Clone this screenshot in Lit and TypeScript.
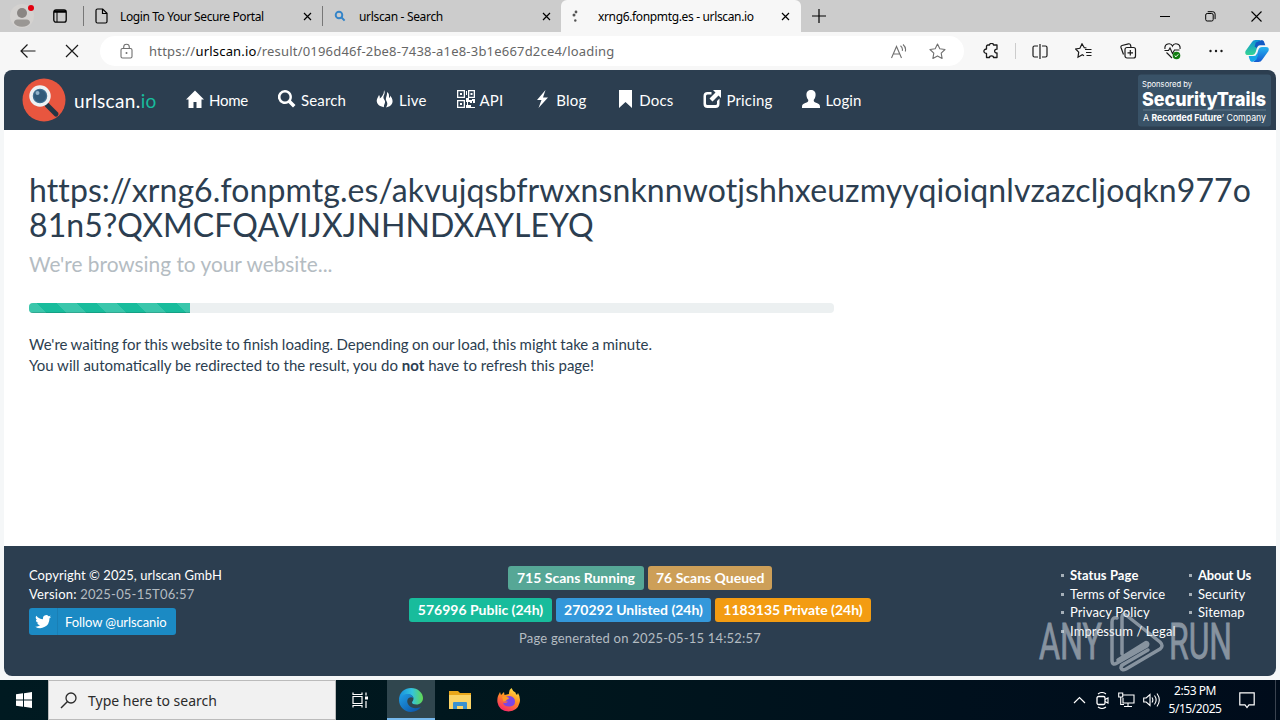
import { LitElement, html, css, svg } from "lit";
import { customElement } from "lit/decorators.js";

const icon = (body: unknown, w = 18, h = 18, vb = `0 0 ${w} ${h}`) =>
  html`<svg width=${w} height=${h} viewBox=${vb} fill="none" stroke="currentColor" stroke-width="1">${body}</svg>`;

const closeX = icon(svg`<path d="M1 1l7 7M8 1l-7 7" stroke-width="1.2"/>`, 9, 9);

/* ---------- Browser tab strip ---------- */
@customElement("tab-strip")
class TabStrip extends LitElement {
  static styles = css`
    :host { display: flex; height: 32px; background: #cccccc; color: #000; font: 12px "Noto Sans", sans-serif; }
    svg { display: block; flex: none; }
    .profile { position: relative; width: 48px; padding: 4px 0 0 10px; box-sizing: border-box; }
    .dot { position: absolute; left: 28px; top: 5px; width: 6px; height: 6px; border-radius: 50%; background: #e3000f; }
    .workspace { width: 35px; display: flex; align-items: center; padding-left: 5px; box-sizing: border-box; }
    .tab { display: flex; align-items: center; width: 239px; box-sizing: border-box; padding: 0 10px 0 12px; position: relative; }
    .tab::before { content: ""; position: absolute; left: 0; top: 6px; width: 1px; height: 20px; background: #777; }
    .tab span { flex: 1; white-space: nowrap; }
    .first span { padding-left: 12px; letter-spacing: -0.4px; }
    .second span { padding-left: 13px; letter-spacing: -0.33px; }
    .active { width: 240px; background: #f7f7f7; border-radius: 6px 6px 0 0; padding-left: 10px; padding-right: 11px; }
    .active::before { display: none; }
    .active span { padding-left: 19px; letter-spacing: -0.35px; }
    .plus { padding: 9px 0 0 11px; flex: 1; border-radius: 0 0 0 5px; }
    .win { display: flex; align-items: center; gap: 35px; padding-right: 18px; }
  `;
  render() {
    return html`
      <div class="profile">
        ${icon(svg`<circle cx="12" cy="12" r="12" fill="#d4d2d0" stroke="none"/><circle cx="12" cy="9" r="5" fill="#8a8683" stroke="none"/><path d="M4 19q0-3.500 3.500-3.500h9q3.500 0 3.500 3.500q-2 3.700-8 3.700t-8-3.700z" fill="#9a9794" stroke="none"/>`, 24, 24)}
        <div class="dot"></div>
      </div>
      <div class="workspace">${icon(svg`<rect x=".8" y=".8" width="12.400" height="12.400" rx="2.200" stroke-width="1.300"/><path d="M1 2.500h12" stroke-width="2.500"/><path d="M4 3v10" stroke-width="1"/>`, 14, 14)}</div>
      <div class="tab first">
        ${icon(svg`<path d="M1 2.500Q1 1 2.500 1h5.200L12 5.300v8.200q0 1.500-1.500 1.500h-8Q1 15 1 13.500zM7.500 1v4.500h4.500" stroke-width="1.200"/>`, 13, 16)}
        <span>Login To Your Secure Portal</span>${closeX}
      </div>
      <div class="tab second">
        ${icon(svg`<circle cx="5" cy="5" r="3.300" stroke="#3484c8" stroke-width="1.900"/><path d="M7.300 7.300l3.300 3.300" stroke="#3484c8" stroke-width="2"/>`, 12, 12)}
        <span>urlscan - Search</span>${closeX}
      </div>
      <div class="tab active">
        ${icon(svg`<g fill="#555" stroke="none"><circle cx="5" cy="2" r="1.400"/><circle cx="3" cy="5" r="1.500"/><circle cx="4.300" cy="10.500" r="1.200"/></g>`, 8, 13)}
        <span>xrng6.fonpmtg.es - urlscan.io</span>${closeX}
      </div>
      <div class="plus">${icon(svg`<path d="M7 0v14M0 7h14" stroke-width="1.200"/>`, 14, 14)}</div>
      <div class="win">
        ${icon(svg`<path d="M0 5.500h10"/>`, 10, 10)}
        ${icon(svg`<rect x=".7" y="2.500" width="7.500" height="7.500" rx="1.500"/><path d="M2.700.7h5q2.400 0 2.400 2.400v5"/>`, 11, 11)}
        ${icon(svg`<path d="M.5.5l10 10M10.500.5l-10 10" stroke-width="1.100"/>`, 11, 11)}
      </div>`;
  }
}

/* ---------- Address bar ---------- */
@customElement("tool-bar")
class ToolBar extends LitElement {
  static styles = css`
    :host { display: flex; align-items: center; height: 38px; background: #f7f7f7; color: #1a1a1a; box-sizing: border-box; padding-left: 20px; }
    svg { display: block; flex: none; }
    .stop { margin: 0 21px 0 29px; }
    .address { display: flex; align-items: center; width: 864px; height: 30px; box-sizing: border-box; border-radius: 15px; background: #fff; padding: 0 18px 0 20px; color: #707070; }
    .url { flex: 1; margin-left: 16px; font: 13px "Noto Sans", sans-serif; color: #666; white-space: nowrap; letter-spacing: 0.2px; }
    .url b { font-weight: 400; color: #000; }
    .address svg:last-child { margin-left: 22px; }
    .tools { display: flex; align-items: center; padding-left: 19px; }
    .tools svg { margin-right: 27.500px; }
    .tools svg:first-child { margin-right: 17px; }
    .tools svg:last-child { margin: 0 0 0 -5px; }
    .sep { width: 1px; height: 16px; background: #ccc; margin-right: 15.500px; }
  `;
  render() {
    return html`
      ${icon(svg`<path d="M15.500 7H.8M7.500.5L1 7l6.500 6.500" stroke-width="1.200"/>`, 16, 14)}
      <span class="stop">${icon(svg`<path d="M1 1l12 12M13 1L1 13" stroke-width="1.200"/>`, 14, 14)}</span>
      <div class="address">
        ${icon(svg`<rect x="1" y="5.500" width="11" height="9.500" rx="1.500" stroke-width="1.100"/><path d="M3.700 5.500V4a2.800 2.800 0 0 1 5.600 0v1.500" stroke-width="1.100"/><circle cx="6.500" cy="10" r="1" fill="currentColor" stroke="none"/>`, 13, 16)}
        <div class="url">https://<b>urlscan.io</b>/result/0196d46f-2be8-7438-a1e8-3b1e667d2ce4/loading</div>
        ${icon(svg`<path d="M.5 14L5.500 2.500L10.500 14M2.300 10h6.400M9.500 1.800q2.500 2 1.800 5M12 .5q3.400 3 2.300 7" stroke-width="1.100"/>`, 16, 15)}
        ${icon(svg`<path d="M8.500 1l2.300 4.700 5.200.8-3.800 3.700.9 5.200-4.600-2.500-4.600 2.500.9-5.200L1 6.500l5.200-.8z" stroke-linejoin="round" stroke-width="1.100"/>`, 17, 17)}
      </div>
      <div class="tools">
        ${icon(svg`<path d="M3.500 3.500Q3.500 2 5 2h1.500c0-2.200 4-2.200 4 0H14v4.200c-3.200-.3-3.200 4.100 0 3.800v4.500h-3.500c0-2.200-4-2.200-4 0H3.500v-4.200c-3.500 0-3.500-4.300 0-4.300z" stroke-width="1.300" stroke-linejoin="round"/>`, 15, 16)}
        <div class="sep"></div>
        ${icon(svg`<path d="M6 2H2.500Q1 2 1 3.500v8Q1 13 2.500 13H6M10 2h3.500Q15 2 15 3.500v8q0 1.500-1.500 1.500H10M8 0v15" stroke-width="1.200"/>`, 16, 15)}
        ${icon(svg`<path d="M11.500 5l-2.200-.3L7 .8 4.900 5.300.7 6l3 3.200-.7 5 4.300-2.500 1.700 1M10 6.500h6.500M11 9.500h5.500M11.500 12.500h5" stroke-width="1.200"/>`, 17, 16)}
        ${icon(svg`<path d="M3.500 11.500L1 4.500Q.6 3 2 2.500L8.500.8Q10 .5 10.500 2l.5 2" stroke-width="1.200"/><rect x="5" y="4.500" width="10.500" height="10.500" rx="2" stroke-width="1.200"/><path d="M10.300 7v5.500M7.500 9.800H13" stroke-width="1.200"/>`, 17, 16)}
        ${icon(svg`<path d="M1 6C0 0 7-.5 8.500 3 10-.5 17 0 16 6M2.500 9.500L8 15M.5 7.500h4L6 5l2.500 5.500L10.500 7h5" stroke-width="1.100"/><circle cx="12.500" cy="12.500" r="3.800" fill="#107c10" stroke="none"/><path d="M10.700 12.600l1.300 1.200 2.300-2.500" stroke="#fff"/>`, 17, 17)}
        ${icon(svg`<g fill="currentColor" stroke="none"><circle cx="1.500" cy="2" r="1.200"/><circle cx="7" cy="2" r="1.200"/><circle cx="12.500" cy="2" r="1.200"/></g>`, 14, 4)}
        ${icon(svg`<defs><linearGradient id="a" x1="0" y1="0" x2="0" y2="1"><stop offset="0" stop-color="#0e91d5"/><stop offset="1" stop-color="#35d593"/></linearGradient><linearGradient id="b" x1="0" y1="0" x2="0" y2="1"><stop offset="0" stop-color="#27b5f0"/><stop offset="1" stop-color="#1459d0"/></linearGradient></defs><g stroke="none"><path d="M7 2q1-2 3.500-2H17q-2.500 0-3.500 3l-2.800 9Q9.800 15 7 15H3Q-.6 15 .5 11z" fill="url(#a)"/><path d="M17 0q2 .3 2.700 3.500l.6 1.800h-5.500q-2.200 0-3 2.700L9.600 6.500l1.200-4z" fill="#125ac4"/><path d="M17 20q-1 2-3.500 2H7q2.500 0 3.500-3l2.800-9Q14.200 7 17 7h4q3.600 0 2.500 4z" fill="url(#b)"/><path d="M7 22q-2-.3-2.700-3.500L3.700 16H9q2 0 3-2.500l1.200 1.500-2 5z" fill="#16a5e8"/></g>`, 24, 22)}
      </div>`;
  }
}

/* ---------- urlscan page ---------- */
const navItems = [
  ["Home", svg`<path d="M9 .5l9 9h-2.500V18h-5v-6h-3v6h-5V9.500H0z"/>`],
  ["Search", svg`<path fill-rule="evenodd" d="M7 0a7 7 0 0 1 6 10.500l4.500 4.500-2.500 2.500-4.500-4.500A7 7 0 1 1 7 0zm0 2.500a4.500 4.500 0 1 0 0 9 4.500 4.500 0 0 0 0-9z"/>`],
  ["Live", svg`<path d="M8 0c2 4-1 5-.5 8 .2 2 2 2 1.500 4.500-.3 2-1.500 2.500-1 4.700C3 16.500.3 13.500.8 10c.3-2 1.500-3 2.200-5 .8 1 1 2 .7 3.500C6 7 8.200 4 8 0zM11 2c3 2 1.500 4 2.300 6 .7-.5 1-1.300.8-2.500 4 4.500 3.500 10.500-4.100 12 1.700-3 1.700-4.500.2-7C9 8 11.500 5.500 11 2z"/>`],
  ["API", svg`<path fill-rule="evenodd" d="M0 0h8v8H0zM1.300 1.300v5.400h5.400V1.300zM3 3h2v2H3zM11 0h7v8h-7zM12.300 1.300v5.400h4.400V1.300zM13.500 3h2v2h-2zM0 10h8v8H0zM1.300 11.300v5.400h5.400v-5.400zM3 13h2v2H3zM9 1h1v4H9zM9 8h3v2h3v3h-2v-1h-2v3h3v2h4v1H9v-3h1v-3H9zM15 9h3v4h-2v-2h-1z"/>`],
  ["Blog", svg`<path d="M12.500 0L4 10h4.500L5.500 18 15 7.500h-5z"/>`],
  ["Docs", svg`<path d="M3 0h13v18l-6.500-6L3 18z"/>`],
  ["Pricing", svg`<path d="M10 0h8v8l-2.500-2.500-6 6L6.500 8.500l6-6z"/><path d="M8.500 2v2.500H4.500Q3 4.500 3 6v7.500Q3 15 4.500 15h8q1.500 0 1.500-1.500V11l2.500-2.500V14q0 4-4 4H4.500Q.5 18 .5 14V6q0-4 4-4z"/>`],
  ["Login", svg`<path d="M9 0c3.500 0 5 2.500 4.500 6-.3 2-1.200 3-1.800 4 0 2 1 2.200 3 3 2.500 1 3.300 1.800 3.300 4v1H0v-1c0-2.200.8-3 3.300-4 2-.8 3-1 3-3-.6-1-1.500-2-1.800-4C4 2.500 5.500 0 9 0z"/>`],
] as const;

@customElement("scan-page")
class ScanPage extends LitElement {
  static styles = css`
    :host { display: flex; flex-direction: column; height: 606px; margin: 0 4px; border-radius: 8px; overflow: hidden; background: #fff; color: #2c3e50; font: 15px/21px Lato, sans-serif; }
    svg { display: block; flex: none; }
    header { display: flex; height: 60px; flex: none; background: #2c3e50; color: #fff; align-items: center; padding: 0 5px 0 18px; box-sizing: border-box; }
    .brand { font-size: 19px; margin: 0 30px 0 8px; letter-spacing: 0.35px; white-space: nowrap; width: 82px; }
    .brand i { font-style: normal; color: #18bc9c; }
    nav { display: flex; gap: 30px; flex: 1; letter-spacing: 0.16px; }
    nav a { display: flex; align-items: center; gap: 5px; white-space: nowrap; }
    nav a:first-child { letter-spacing: -0.25px; }
    nav svg { margin-top: -3px; }
    main { flex: 1; padding: 42px 0 0 25px; }
    h1 { font-size: 32px; line-height: 35px; font-weight: 400; margin: 0; letter-spacing: 0.1px; }
    h1 span { display: block; white-space: nowrap; }
    h2 { font-size: 20.850px; line-height: 24px; font-weight: 400; margin: 10px 0 0; color: #b4bcc2; }
    .track { width: 805px; height: 10px; margin: 27px 0 21px; border-radius: 4px; background: #ecf0f1; overflow: hidden; }
    .bar { width: 20%; height: 10px; background: #18bc9c linear-gradient(45deg, rgba(255,255,255,.15) 25%, transparent 25%, transparent 50%, rgba(255,255,255,.15) 50%, rgba(255,255,255,.15) 75%, transparent 75%) -12px 0 / 40px 40px; box-shadow: inset 0 -1px rgba(0,0,0,.15); }
    p { margin: 0; }
    .wait { word-spacing: -0.45px; }
    footer { position: relative; display: grid; grid-template-columns: 340px 1fr 340px; height: 130px; flex: none; background: #2c3e50; color: #fff; font-size: 13px; line-height: 18.600px; padding: 20px 25px 0; box-sizing: border-box; }
    .muted { color: #b4bcc2; }
    .version { letter-spacing: 0.2px; }
    .copy { letter-spacing: 0.06px; }
    .generated { letter-spacing: 0.2px; margin-top: -1px; }
    .follow { display: flex; width: 147px; height: 27px; margin-top: 5px; background: #1b8ac4; border-radius: 3px; align-items: center; letter-spacing: -0.07px; }
    .bird { width: 29px; height: 27px; border-right: 1px solid #1a7fb5; display: flex; align-items: center; justify-content: center; box-sizing: border-box; }
    .follow span { padding: 1px 0 0 7px; }
    .stats { text-align: center; }
    .row { display: flex; justify-content: center; gap: 4px; margin-bottom: 8px; }
    .badge { height: 24px; line-height: 24px; padding: 0 8px; border-radius: 3px; font-weight: 700; font-size: 14px; white-space: nowrap; box-sizing: border-box; }
    .running { background: #56a796; width: 136px; }
    .queued { background: #cd9f58; width: 124px; }
    .public { background: #18bc9c; width: 143px; }
    .unlisted { background: #3498db; width: 155px; }
    .private { background: #f39c12; width: 156px; }
    .links { display: flex; padding-left: 150px; }
    ul { list-style: none; margin: 0; padding: 0; white-space: nowrap; letter-spacing: 0.1px; }
    .left-list { width: 128px; flex: none; }
    .right-list b { letter-spacing: -0.15px; }
    li::before { content: ""; display: inline-block; width: 3px; height: 3px; background: #a5afb8; margin: 0 6px 3px 0; }
    .mark { position: absolute; left: 1034px; top: 62px; opacity: .55; }
  `;
  render() {
    return html`
      <header>
        ${icon(svg`<circle cx="22" cy="22" r="21.500" fill="#e8563f" stroke="none"/><path d="M25 27l9 9" stroke="#243544" stroke-width="5" stroke-linecap="round"/><circle cx="18" cy="18" r="9" fill="#3f6f91" stroke="#eef1f3" stroke-width="3.500"/><circle cx="18" cy="18" r="6" fill="#315a7a" stroke="none"/><circle cx="15.500" cy="15" r="2" fill="#91b3cb" stroke="none"/>`, 44, 44)}
        <div class="brand">urlscan.<i>io</i></div>
        <nav>${navItems.map(([label, shape]) => html`<a>${icon(svg`<g fill="currentColor" stroke="none">${shape}</g>`)}${label}</a>`)}</nav>
        ${icon(svg`<rect width="133" height="52" y=".5" rx="3" fill="#395267" stroke="none"/><g fill="#fff" stroke="none" font-family="Inter, sans-serif"><text x="4" y="13" font-size="8" textLength="50" lengthAdjust="spacingAndGlyphs">Sponsored by</text><text x="4" y="32" font-size="19" font-weight="800" textLength="124" lengthAdjust="spacingAndGlyphs">SecurityTrails</text><text x="5" y="47" font-size="9.500" textLength="123" lengthAdjust="spacingAndGlyphs">A <tspan font-weight="700">Recorded Future</tspan>’ Company</text></g><path d="M5 36h123" stroke="#71869a" stroke-width=".7"/>`, 133, 53)}
      </header>
      <main>
        <h1><span>https://xrng6.fonpmtg.es/akvujqsbfrwxnsnknnwotjshhxeuzmyyqioiqnlvzazcljoqkn977o</span><span>81n5?QXMCFQAVIJXJNHNDXAYLEYQ</span></h1>
        <h2>We're browsing to your website...</h2>
        <div class="track"><div class="bar"></div></div>
        <p class="wait">We're waiting for this website to finish loading. Depending on our load, this might take a minute.</p>
        <p>You will automatically be redirected to the result, you do <b>not</b> have to refresh this page!</p>
      </main>
      <footer>
        <div>
          <div class="copy">Copyright © 2025, urlscan GmbH</div>
          <div class="version">Version: <span class="muted">2025-05-15T06:57</span></div>
          <div class="follow"><div class="bird">${icon(svg`<path fill="currentColor" stroke="none" d="M16 1.700a6 6 0 0 1-1.700.5A3 3 0 0 0 15.600.500a6 6 0 0 1-2 .8 3.200 3.200 0 0 0-5.500 3A9 9 0 0 1 1.300.800a3.300 3.300 0 0 0 1 4.400 3 3 0 0 1-1.500-.4 3.300 3.300 0 0 0 2.600 3.200 3 3 0 0 1-1.400.1 3.300 3.300 0 0 0 3 2.200A6.500 6.500 0 0 1 .2 11.700 9.300 9.300 0 0 0 14.400 3.400 6 6 0 0 0 16 1.700z"/>`, 16, 14)}</div><span>Follow @urlscanio</span></div>
        </div>
        <div class="stats">
          <div class="row"><div class="badge running">715 Scans Running</div><div class="badge queued">76 Scans Queued</div></div>
          <div class="row"><div class="badge public">576996 Public (24h)</div><div class="badge unlisted">270292 Unlisted (24h)</div><div class="badge private">1183135 Private (24h)</div></div>
          <div class="muted generated">Page generated on 2025-05-15 14:52:57</div>
        </div>
        <div class="links">
          <ul class="left-list"><li><b>Status Page</b></li><li>Terms of Service</li><li>Privacy Policy</li><li>Impressum / Legal</li></ul>
          <ul class="right-list"><li><b>About Us</b></li><li>Security</li><li>Sitemap</li></ul>
        </div>
        <div class="mark">${icon(svg`<g fill="#d2d9e1" stroke="#d2d9e1" stroke-width=".8" font-family="Roboto, sans-serif" font-size="50"><text x="1" y="51" textLength="63" lengthAdjust="spacingAndGlyphs">ANY</text><text x="131" y="51" textLength="63" lengthAdjust="spacingAndGlyphs">RUN</text></g><g stroke="#d2d9e1" stroke-width="3.500" stroke-linejoin="round" stroke-linecap="round"><path d="M79 10Q74 9 74 14v38q0 6 5 3l30-17q2-3-1-3.500L80 52M84 46V9q0-4 4-2l34 27q4 4 0 7L88 61q-4 2-5-1 0-3 3-4l24-14"/></g>`, 200, 66)}</div>
      </footer>`;
  }
}

/* ---------- Windows taskbar ---------- */
@customElement("task-bar")
class TaskBar extends LitElement {
  static styles = css`
    :host { display: flex; height: 40px; background: linear-gradient(90deg, #001a21 0, #00161d 45%, #00101d 75%, #000c1b 100%); color: #fff; font: 12px/18px "Noto Sans", sans-serif; }
    svg { display: block; flex: none; }
    .cell { display: flex; align-items: center; justify-content: center; width: 48px; }
    .search { display: flex; align-items: center; gap: 11px; width: 288px; background: #f1f1f1; border: 1px solid #bbb; box-sizing: border-box; padding-left: 11px; color: #2b2b2b; font-size: 14px; }
    .search span { padding-top: 1px; }
    .task { width: 51px; padding-right: 2px; box-sizing: border-box; }
    .edge { background: #30464e; box-shadow: inset 0 -2px #76b9ed; }
    .pin { width: 49px; }
    .tray { display: flex; flex: 1; justify-content: flex-end; align-items: center; gap: 8px; }
    .clock { text-align: center; width: 56px; margin-left: -2px; margin-right: 2px; letter-spacing: -0.45px; white-space: nowrap; }
    .note { padding: 0 20px 0 6px; height: 40px; display: flex; align-items: center; border-right: 1px solid #3a4350; margin-right: 4px; }
  `;
  render() {
    return html`
      <div class="cell">${icon(svg`<path fill="#fff" stroke="none" d="M0 2.300l7-1v6.200H0zM8 1.200L16 0v7.500H8zM0 8.500h7v6.200l-7-1zM8 8.500h8V16l-8-1.200z"/>`, 16, 16)}</div>
      <div class="search">${icon(svg`<circle cx="11" cy="6" r="5" stroke-width="1.300"/><path d="M7.500 9.500L1 16" stroke-width="1.400"/>`, 17, 17)}<span>Type here to search</span></div>
      <div class="cell task">${icon(svg`<path d="M1 .5v2h9v-2M1 15.500v-2h9v2M1 4.500h9v7H1zM14 .5v3M14 9v7" stroke-width="1.200"/><path d="M13 4.500h3v3h-3z" fill="#fff" stroke="none"/>`, 17, 16)}</div>
      <div class="cell edge">${icon(svg`<defs><linearGradient id="e1" x1="0" x2="1"><stop offset="0" stop-color="#168fdf"/><stop offset=".55" stop-color="#34c4dd"/><stop offset="1" stop-color="#62d94f"/></linearGradient><linearGradient id="e2" x1="0" y1="0" x2="1" y2="1"><stop offset="0" stop-color="#209ee5"/><stop offset="1" stop-color="#0a4fa5"/></linearGradient></defs><g stroke="none"><path d="M0 12C0 4 6 0 12 0c7 0 12 5 12 10 0 4-3 6.500-6.500 6.500-3 0-4.500-1-4.500-2s1.500-1.500 1.500-4c0-2-2-4-5-4-4 0-8 2.500-9.500 5.500z" fill="url(#e1)"/><path d="M0 12c1-4 4.500-6 8.500-6 3.200 0 5.500 1.700 6 4-5-2.500-8.500 3-4.500 7.500 3 3.300 8 3.500 12 1.300C20 22 16.500 24 12 24 5 24 0 18 0 12z" fill="url(#e2)"/></g>`, 24, 24)}</div>
      <div class="cell pin">${icon(svg`<g stroke="none"><path d="M0 1h9l2 2h11v16H0z" fill="#e9a71b"/><path d="M0 5h22v14H0z" fill="#fbd467"/><path d="M4 19v-6q0-1 1-1h12q1 0 1 1v6h-4v-3H8v3z" fill="#3b91cf"/></g>`, 22, 20)}</div>
      <div class="cell pin">${icon(svg`<defs><linearGradient id="f1" x1=".8" y1="0" x2=".3" y2="1"><stop offset="0" stop-color="#ffe84a"/><stop offset=".45" stop-color="#ff9221"/><stop offset="1" stop-color="#f9246b"/></linearGradient></defs><g stroke="none"><path d="M1 8l2-4 1 3 3-3 .5 3L12 6q-.5-4 2.500-6 1 3 4 4.500 0 1 1.500 2.500l1-2q3 5 1.500 10-2 8-11 8.500Q2 23 .5 14.500 0 11 1 8z" fill="url(#f1)"/><path d="M7 11q1-3 6-3 5 1 5 5.500t-5 5q-6 .5-7-4 3 1.500 5-1H7z" fill="#7b45e6"/><path d="M5 9q2-2 5 0l2 1q0 1-2 1.500-1 2.500-3.500 2z" fill="#ff9a24"/></g>`, 24, 24)}</div>
      <div class="tray">
        ${icon(svg`<path d="M1 7l5.500-5.500L12 7" stroke-width="1.200"/>`, 13, 9)}
        ${icon(svg`<g transform="translate(2 0)"><rect x="1" y="4.500" width="8" height="8" rx="1.500" stroke-width="1.300"/><path d="M9 7.500l3-1.500v5l-3-1.500M2 2q4-3 8 0M2 15q4 3 8 0" stroke-width="1.100"/></g>`, 16, 17)}
        ${icon(svg`<path d="M5 3h11v8H5V6M10 11v3M6 14.500h8M.7 1h4v4h-4zM2.700 5v7.500H6" stroke-width="1.100"/>`, 17, 16)}
        ${icon(svg`<path d="M.7 6h2.500L7 2.500v11L3.200 10H.7zM9 5.500q1.700 2.500 0 5M11.500 3.500q3.300 4.500 0 9M14 1.500q4.600 6.500 0 13" stroke-width="1.100"/>`, 18, 16)}
        <div class="clock">2:53 PM<br />5/15/2025</div>
        <div class="note">${icon(svg`<path d="M.8.8h14.400v12H10L8 15.500 6 12.800H.8z" stroke-width="1.200"/>`, 16, 17)}</div>
      </div>`;
  }
}

@customElement("app-root")
class AppRoot extends LitElement {
  static styles = css`
    :host { display: block; width: 1280px; height: 720px; overflow: hidden; background: #f5f7f8; }
    .view { display: flex; flex-direction: column; height: 720px; }
    scan-page { margin-bottom: 4px; }
  `;
  render() {
    return html`<div class="view"><tab-strip></tab-strip><tool-bar></tool-bar><scan-page></scan-page><task-bar></task-bar></div>`;
  }
}
